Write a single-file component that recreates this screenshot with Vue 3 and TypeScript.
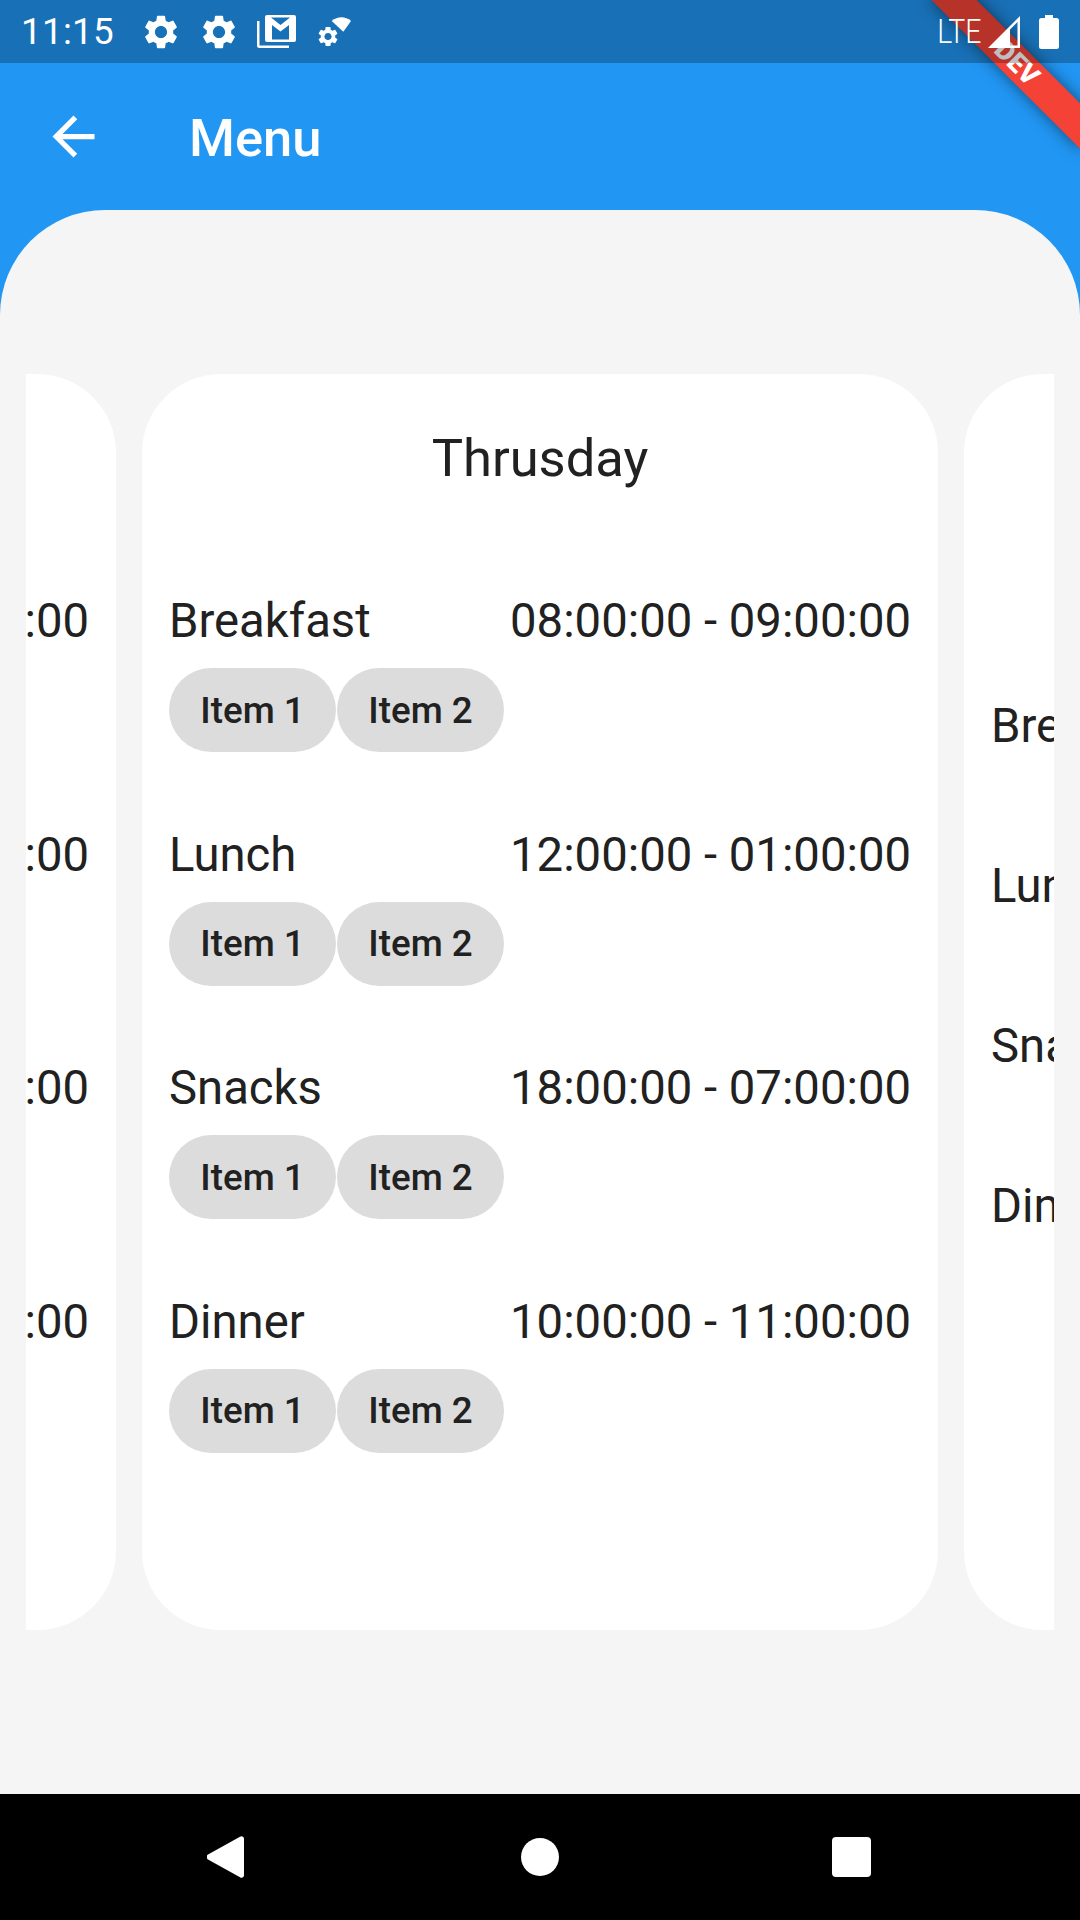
<script setup lang="ts">
interface Meal {
  name: string
  time: string
}

interface Day {
  title: string
  items: string[]
}

const meals: Meal[] = [
  { name: 'Breakfast', time: '08:00:00 - 09:00:00' },
  { name: 'Lunch', time: '12:00:00 - 01:00:00' },
  { name: 'Snacks', time: '18:00:00 - 07:00:00' },
  { name: 'Dinner', time: '10:00:00 - 11:00:00' }
]

const days: Day[] = [
  { title: 'Wednesday', items: ['Item 1', 'Item 2'] },
  { title: 'Thrusday', items: ['Item 1', 'Item 2'] },
  { title: 'Friday', items: [] }
]

const gear =
  'M19.14 12.94c.04-.3.06-.61.06-.94 0-.32-.02-.64-.07-.94l2.03-1.58c.18-.14.23-.41.12-.61l-1.92-3.32c-.12-.22-.37-.29-.59-.22l-2.39.96c-.5-.38-1.03-.7-1.62-.94l-.36-2.54c-.04-.24-.24-.41-.48-.41h-3.84c-.24 0-.43.17-.47.41l-.36 2.54c-.59.24-1.13.57-1.62.94l-2.39-.96c-.22-.08-.47 0-.59.22L2.74 8.87c-.12.21-.08.47.12.61l2.03 1.58c-.05.3-.09.63-.09.94s.02.64.07.94l-2.03 1.58c-.18.14-.23.41-.12.61l1.92 3.32c.12.22.37.29.59.22l2.39-.96c.5.38 1.03.7 1.62.94l.36 2.54c.05.24.24.41.48.41h3.84c.24 0 .44-.17.47-.41l.36-2.54c.59-.24 1.13-.56 1.62-.94l2.39.96c.22.08.47 0 .59-.22l1.92-3.32c.12-.22.07-.47-.12-.61l-2.01-1.58zM12 15.6c-1.98 0-3.6-1.62-3.6-3.6s1.62-3.6 3.6-3.6 3.6 1.62 3.6 3.6-1.62 3.6-3.6 3.6z'
</script>

<template>
  <div class="screen">
    <div class="status">
      <span class="clock">11:15</span>
      <svg class="gear" viewBox="2.6 2 18.8 20"><path :d="gear" /></svg>
      <svg class="gear gear-two" viewBox="2.6 2 18.8 20"><path :d="gear" /></svg>
      <svg class="mail" viewBox="0 0 39 33">
        <path d="M0 6h2.500v24.500H32V33H2.500A2.500 2.500 0 0 1 0 30.500z" />
        <path
          fill-rule="evenodd"
          d="M10 0h27a2 2 0 0 1 2 2v23a2 2 0 0 1-2 2H10a2 2 0 0 1-2-2V2a2 2 0 0 1 2-2zM14 2.500L23.500 10 33 2.500zM15 24.500V10l8.500 6.500L32 10V24.500z"
        />
      </svg>
      <svg class="wifi" viewBox="0 0 33 31">
        <path d="M13.700 5C19.500 0 27.500 0 33 5L25.300 15.800z" />
        <svg x="0" y="10.500" width="20" height="20" viewBox="2.6 2 18.8 20"><path :d="gear" /></svg>
      </svg>
      <span class="spacer"></span>
      <span class="lte">LTE</span>
      <svg class="signal" viewBox="0 0 32 32">
        <path fill-rule="evenodd" d="M32 0v32H0zM29.500 6L22 13.500V29.500h7.500z" />
      </svg>
      <svg class="battery" viewBox="0 0 20 34">
        <path d="M6 0h8v3h3.500A2.500 2.500 0 0 1 20 5.500V31.500a2.500 2.500 0 0 1-2.500 2.500H2.500A2.500 2.500 0 0 1 0 31.500V5.500A2.500 2.500 0 0 1 2.500 3H6z" />
      </svg>
    </div>

    <header class="appbar">
      <svg class="back" viewBox="0 0 24 24">
        <path d="M20 11H7.830l5.590-5.590L12 4l-8 8 8 8 1.410-1.410L7.830 13H20v-2z" />
      </svg>
      <h1 class="title">Menu</h1>
    </header>

    <main class="body">
      <div class="carousel">
        <section v-for="day in days" :key="day.title" class="card" :class="{ 'card-empty': !day.items.length }">
          <h2 class="day">{{ day.title }}</h2>
          <div v-for="meal in meals" :key="meal.name" class="meal">
            <div class="meal-head">
              <span>{{ meal.name }}</span>
              <span>{{ meal.time }}</span>
            </div>
            <div v-if="day.items.length" class="chips">
              <span v-for="item in day.items" :key="item" class="chip">{{ item }}</span>
            </div>
          </div>
        </section>
      </div>
    </main>

    <nav class="navbar">
      <svg class="nav-back" viewBox="0 0 37 42">
        <path d="M33 0.800a2.500 2.500 0 0 1 4 1.700V39.500a2.500 2.500 0 0 1-4 1.700L1 23.500a3 3 0 0 1 0-5z" />
      </svg>
      <span class="nav-home"></span>
      <span class="nav-recent"></span>
    </nav>

    <div class="ribbon">DEV</div>
  </div>
</template>

<style>
html,
body {
  margin: 0;
  background: #f5f5f5;
}
</style>

<style scoped>
.screen {
  position: relative;
  display: flex;
  flex-direction: column;
  width: 1080px;
  height: 1920px;
  overflow: hidden;
  background: #2196f3;
  font-family: Roboto, "Liberation Sans", sans-serif;
  color: #212121;
}

.status {
  position: relative;
  z-index: 2;
  display: flex;
  align-items: center;
  flex: none;
  height: 63px;
  padding: 0 21px 0 21px;
  box-sizing: border-box;
  background: rgba(0, 0, 0, 0.25);
  color: #fff;
}

.status svg {
  flex: none;
  fill: #fff;
}

.clock {
  width: 124px;
  font-size: 36.75px;
  letter-spacing: 0.3px;
}

.gear {
  width: 32px;
  height: 34px;
}

.gear-two {
  margin-left: 26px;
}

.mail {
  width: 39px;
  height: 33px;
  margin-left: 22px;
}

.wifi {
  width: 33px;
  height: 31px;
  margin-left: 22px;
}

.spacer {
  flex: 1;
}

.lte {
  font-size: 33px;
  font-weight: 300;
  margin-right: 7px;
  transform: scaleX(0.86);
  transform-origin: right center;
}

.signal {
  width: 32px;
  height: 32px;
  margin-right: 19px;
}

.battery {
  width: 20px;
  height: 34px;
}

.appbar {
  display: flex;
  align-items: center;
  flex: none;
  height: 147px;
  padding-left: 42px;
  box-sizing: border-box;
  color: #fff;
}

.back {
  width: 63px;
  height: 63px;
  fill: #fff;
}

.title {
  margin: 2px 0 0 84px;
  font-size: 52.5px;
  font-weight: 500;
}

.body {
  flex: 1;
  padding-top: 164px;
  border-radius: 105px 105px 0 0;
  background: #f5f5f5;
}

.carousel {
  display: flex;
  justify-content: center;
  gap: 26px;
  margin: 0 26px;
  overflow: hidden;
}

.card {
  flex: none;
  width: 796px;
  height: 1256px;
  padding: 0 27px;
  box-sizing: border-box;
  border-radius: 79px;
  background: #fff;
}

.day {
  margin: 0;
  padding: 53px 0 104px;
  font-size: 52.5px;
  font-weight: 400;
  line-height: 62px;
  text-align: center;
}

.meal {
  height: 233.6px;
}

.card-empty .meal {
  height: 160px;
}

.card-empty .meal:first-of-type {
  margin-top: 105px;
}

.meal-head {
  display: flex;
  justify-content: space-between;
  font-size: 47.25px;
  line-height: 56px;
  white-space: nowrap;
}

.chips {
  display: flex;
  gap: 1px;
  margin-top: 19px;
}

.chip {
  display: flex;
  align-items: center;
  justify-content: center;
  width: 167px;
  height: 84px;
  border-radius: 42px;
  background: #dcdcdc;
  font-size: 36.75px;
  font-weight: 500;
}

.navbar {
  position: relative;
  display: flex;
  align-items: center;
  flex: none;
  height: 126px;
  background: #000;
}

.nav-back {
  width: 37px;
  height: 42px;
  margin-left: 207px;
  fill: #fff;
}

.nav-home {
  width: 38px;
  height: 38px;
  margin-left: 277px;
  border-radius: 50%;
  background: #fff;
}

.nav-recent {
  width: 39px;
  height: 40px;
  margin-left: 273px;
  border-radius: 4px;
  background: #fff;
}

.ribbon {
  position: absolute;
  top: 47px;
  left: 912px;
  z-index: 1;
  width: 210px;
  height: 32px;
  transform: rotate(45deg);
  background: #f44336;
  box-shadow: 0 0 16px rgba(0, 0, 0, 0.5);
  color: #fff;
  font-size: 27px;
  font-weight: 900;
  line-height: 32px;
  text-align: center;
}
</style>
